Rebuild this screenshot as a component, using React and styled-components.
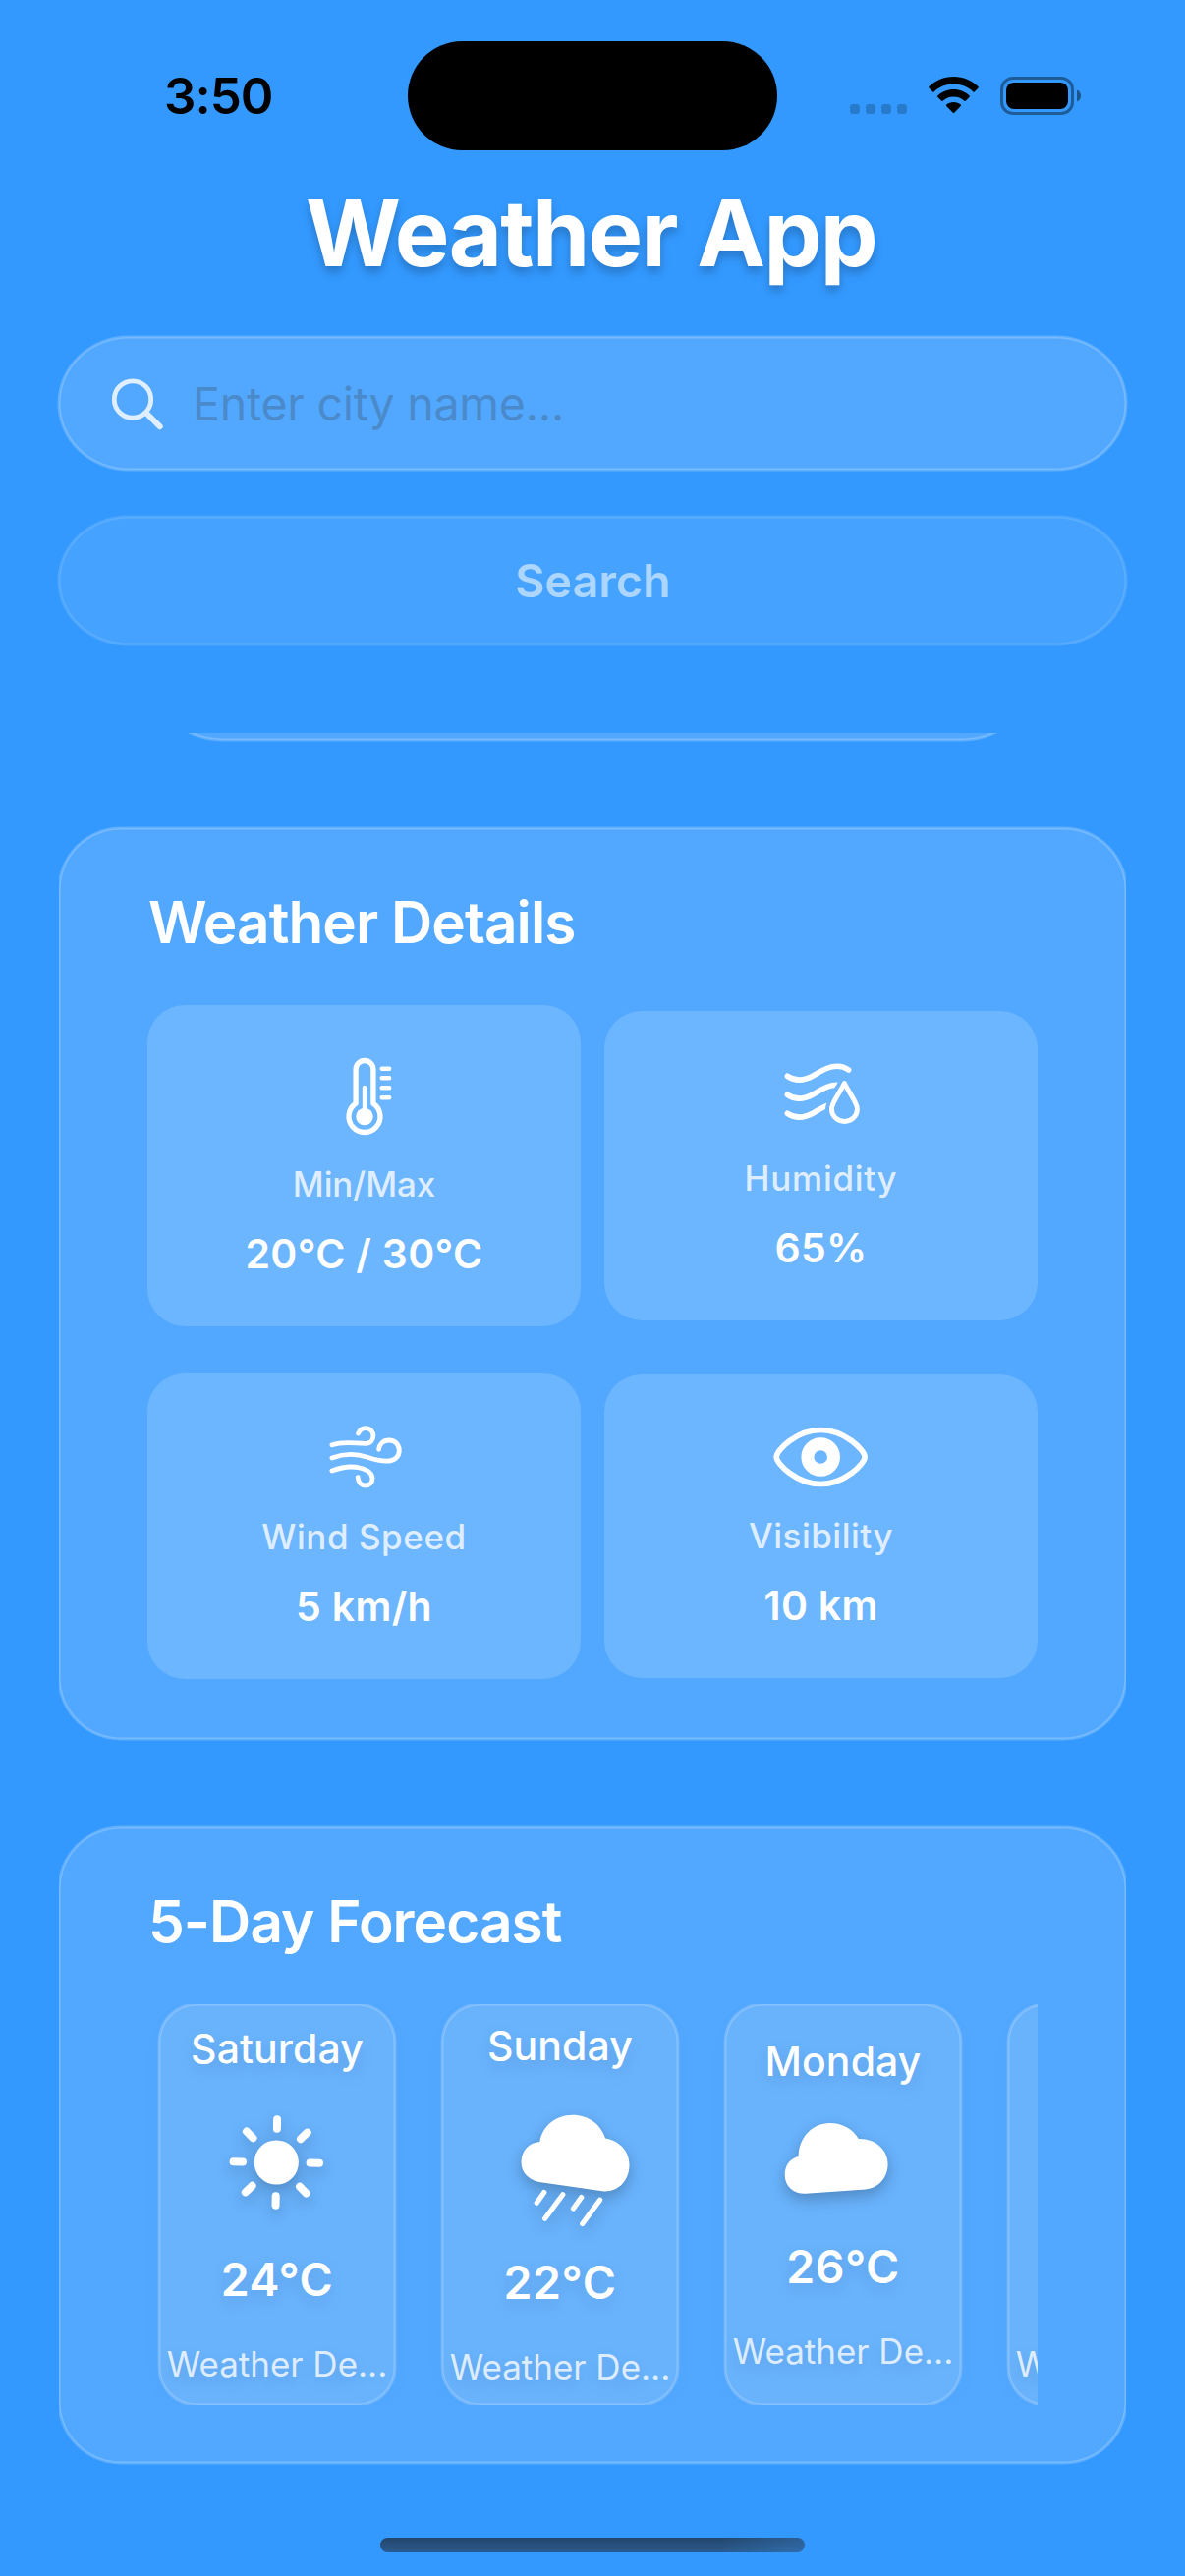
import React from "react";
import styled, { createGlobalStyle } from "styled-components";

const GlobalStyle = createGlobalStyle`
  * { box-sizing: border-box; }
  body {
    margin: 0;
    background: #3399ff;
    font-family: Inter, "Liberation Sans", sans-serif;
    color: #fff;
  }
`;

const Screen = styled.main`
  position: relative;
  display: flex;
  flex-direction: column;
  width: 1206px;
  height: 2622px;
  overflow: hidden;
  background: #3399ff;
`;

/* Status bar */

const StatusBar = styled.header`
  display: grid;
  grid-template-columns: 415px 376px 415px;
  align-items: center;
  height: 193px;
  flex: none;
`;

const Clock = styled.time`
  padding: 3px 0 0 167px;
  font-size: 51px;
  font-weight: 600;
  line-height: 62px;
  letter-spacing: -1px;
  color: #000;
`;

const Island = styled.div`
  height: 111px;
  margin-top: 1px;
  border-radius: 56px;
  background: #000;
`;

const StatusIcons = styled.div`
  display: flex;
  align-items: center;
  gap: 22px;
  padding: 1px 0 0 74px;
`;

const SignalDots = styled.div`
  display: flex;
  gap: 6px;
  margin-top: 27px;
`;

const SignalDot = styled.i`
  width: 10px;
  height: 10px;
  border-radius: 3px;
  background: rgba(0, 0, 0, 0.2);
`;

/* Header and search */

const Title = styled.h1`
  margin: -12px 0 50px;
  flex: none;
  font-size: 93.5px;
  font-weight: 700;
  line-height: 112px;
  letter-spacing: -1.7px;
  text-indent: -3px;
  text-align: center;
  text-shadow: 0 6px 10px rgba(0, 0, 0, 0.22);
`;

const SearchArea = styled.section`
  display: flex;
  flex-direction: column;
  gap: 48px;
  padding: 0 60px;
  flex: none;
`;

const glass = (stroke) => `
  box-shadow: 0 0 0 1.5px rgba(255, 255, 255, ${stroke}),
    inset 0 0 0 1.5px rgba(255, 255, 255, ${stroke});
`;

const SearchField = styled.label`
  display: flex;
  align-items: center;
  height: 135px;
  padding: 0 50px;
  gap: 26px;
  border-radius: 71px / 67.5px;
  background: rgba(255, 255, 255, 0.152);
  ${glass(0.22)}
`;

const CityInput = styled.input`
  flex: 1;
  min-width: 0;
  padding: 0;
  border: 0;
  outline: 0;
  background: none;
  font: 400 46.5px/60px Inter, "Liberation Sans", sans-serif;
  letter-spacing: -0.25px;
  color: #fff;
  &::placeholder { color: #4b8aca; opacity: 1; }
`;

const SearchButton = styled.button`
  height: 130px;
  border: 0;
  border-radius: 71px / 65px;
  background: rgba(255, 255, 255, 0.152);
  ${glass(0.22)}
  opacity: 0.6;
  font: 600 46.5px/60px Inter, "Liberation Sans", sans-serif;
  letter-spacing: 0.1px;
  text-indent: 1px;
  color: #fff;
`;

/* Scrolling content */

const ScrollArea = styled.section`
  display: flex;
  flex-direction: column;
  gap: 90px;
  margin: 90px 60px 0;
  flex: 1;
  overflow: hidden;
`;

const CurrentWeatherEdge = styled.div`
  height: 160px;
  margin: -153px 90px 0;
  flex: none;
  border-radius: 76px;
  background: rgba(255, 255, 255, 0.152);
  ${glass(0.22)}
`;

const Card = styled.section`
  flex: none;
  height: ${(p) => p.$height}px;
  padding: 60px 90px;
  border-radius: 63px;
  background: rgba(255, 255, 255, 0.152);
  ${glass(0.22)}
`;

const CardTitle = styled.h2`
  margin: 0 0 48px;
  padding-left: 1px;
  font-size: 58.5px;
  font-weight: 600;
  line-height: 72px;
  letter-spacing: -0.95px;
`;

const DetailGrid = styled.div`
  display: grid;
  grid-template-columns: 1fr 1fr;
  align-items: center;
  gap: 48px 24px;
`;

const DetailTile = styled.article`
  display: flex;
  flex-direction: column;
  align-items: center;
  padding: 45px 0 44px;
  border-radius: 38px;
  background: rgba(255, 255, 255, 0.152);
`;

const DetailIcon = styled.div`
  display: flex;
  height: ${(p) => p.$height}px;
`;

const DetailLabel = styled.span`
  margin: 18px 0 19px;
  font-size: 35px;
  font-weight: 450;
  line-height: 46px;
  letter-spacing: ${(p) => p.$tracking}px;
  color: rgba(255, 255, 255, 0.8);
`;

const DetailValue = styled.span`
  font-size: 41px;
  font-weight: 600;
  line-height: 59px;
  letter-spacing: 0.3px;
`;

const ForecastRow = styled.div`
  display: flex;
  gap: 48px;
  height: 408px;
  padding-left: 12px;
  overflow: hidden;
`;

const ForecastCard = styled.article`
  display: flex;
  flex-direction: column;
  align-items: center;
  justify-content: center;
  gap: 36px;
  width: 240px;
  height: 408px;
  flex: none;
  border-radius: 38px;
  background: rgba(244, 244, 244, 0.15);
  box-shadow: 0 0 0 1.5px rgba(255, 255, 255, 0.2),
    inset 0 0 0 1.5px rgba(255, 255, 255, 0.2),
    0 6px 30px rgba(0, 0, 0, 0.02);
  white-space: nowrap;
  text-shadow: 0 6px 18px rgba(0, 0, 0, 0.12);
`;

const Day = styled.span`
  font-size: 41px;
  font-weight: 500;
  line-height: 50px;
  letter-spacing: 0.1px;
`;

const ForecastIcon = styled.div`
  display: flex;
  height: ${(p) => p.$height}px;
  filter: drop-shadow(0 6px 8px rgba(0, 0, 0, 0.24));
`;

const Temperature = styled.span`
  font-size: 46.5px;
  font-weight: 600;
  line-height: 57px;
  letter-spacing: 0.5px;
`;

const Description = styled.span`
  font-size: 35px;
  line-height: 43px;
  color: rgba(255, 255, 255, 0.8);
`;

const HomeIndicator = styled.div`
  position: absolute;
  left: 387px;
  bottom: 24px;
  width: 432px;
  height: 15px;
  border-radius: 8px;
  background: linear-gradient(90deg, transparent 80%, rgba(60, 140, 220, 0.35)),
    linear-gradient(180deg, #24466b, #295b92);
`;

const Icon = styled.svg`
  display: block;
  flex: none;
  overflow: visible;
  fill: none;
  stroke: #fff;
  stroke-linecap: round;
  stroke-linejoin: round;
`;

const SolidIcon = styled(Icon)`
  fill: #000;
  stroke: none;
`;

const WifiIcon = () => (
  <SolidIcon width="51" height="38" viewBox="0 0 51 38">
    <path d="M25.5 0C35.3 0 44.3 3.9 50.6 10.2C51 10.6 51 11.1 50.6 11.5L46.7 15.4C46.3 15.8 45.8 15.8 45.4 15.4C40.2 10.4 33.2 7.5 25.5 7.5S10.8 10.4 5.6 15.4C5.2 15.8 4.7 15.8 4.3 15.4L.4 11.5C0 11.1 0 10.6 .4 10.2C6.7 3.9 15.7 0 25.5 0Z" />
    <path d="M25.5 13C31.8 13 37.5 15.5 41.7 19.4C42.1 19.8 42.1 20.3 41.7 20.7L37.7 24.7C37.3 25.1 36.9 25.1 36.5 24.7C33.6 22 29.7 20.5 25.5 20.5S17.4 22 14.5 24.7C14.1 25.1 13.7 25.1 13.3 24.7L9.3 20.7C8.9 20.3 8.9 19.8 9.3 19.4C13.5 15.5 19.2 13 25.5 13Z" />
    <path d="M25.5 26C28.3 26 30.9 27 32.8 28.6C33.2 29 33.2 29.5 32.8 29.9L26.2 36.7C25.8 37.1 25.2 37.1 24.8 36.7L18.2 29.9C17.8 29.5 17.8 29 18.2 28.6C20.1 27 22.7 26 25.5 26Z" />
  </SolidIcon>
);

const BatteryIcon = () => (
  <Icon width="83" height="39" viewBox="0 0 83 39">
    <rect x="1.5" y="1.5" width="72" height="36" rx="11.5" stroke="#000" strokeOpacity="0.4" strokeWidth="3" />
    <rect x="6" y="6" width="63" height="27" rx="8" fill="#000" stroke="none" />
    <path d="M78 13.5V25.5C80.5 24.5 82 22.2 82 19.5S80.5 14.5 78 13.5Z" fill="#000" fillOpacity="0.45" stroke="none" />
  </Icon>
);

const SearchIcon = () => (
  <Icon width="60" height="60" viewBox="0 0 60 60" opacity="0.82">
    <circle cx="25" cy="25.5" r="18.7" strokeWidth="4.8" />
    <path d="M39.5 40L52.7 53.2" strokeWidth="6" />
  </Icon>
);

const ThermometerIcon = () => (
  <Icon width="60" height="96" viewBox="0 0 60 96" strokeWidth="5.3">
    <path d="M21.1 20.4a8.9 8.9 0 0 1 17.8 0V55.2A16 16 0 1 1 21.1 55.2Z" />
    <path d="M30 39V68" strokeWidth="4.4" />
    <circle cx="30" cy="68.5" r="8.7" fill="#fff" stroke="none" />
    <path d="M47.7 19.7h7.5M47.7 29.3h7.5M47.7 39.3h7.5M47.7 49.3h7.5" strokeWidth="4.4" />
  </Icon>
);

const DROP = "M63.4 28.6C59.5 37.5 50.4 47.5 50.4 55a13 12.5 0 0 0 26 0C76.4 47.5 67.3 37.5 63.4 28.6Z";

const HumidityIcon = () => (
  <Icon width="80" height="84" viewBox="0 0 80 84" strokeWidth="5.6">
    <mask id="around-drop" maskUnits="userSpaceOnUse" x="-5" y="-5" width="90" height="94">
      <rect x="-5" y="-5" width="90" height="94" fill="#fff" stroke="none" />
      <path d={DROP} fill="#000" stroke="#000" strokeWidth="13" />
    </mask>
    <path d="M5.4 21.3C12.5 26 22 26.3 31.5 21C40 16.2 46.5 11.3 56.2 11.3C60.5 11.3 64.3 12.6 67.6 15" />
    <g mask="url(#around-drop)">
      <path d="M5.4 40.3C12.5 45 22 45.3 31.5 40C40 35.2 46.5 30.3 56.2 30.3" />
      <path d="M5.4 59.3C12.5 64 22 64.3 31.5 59C40 54.2 46.5 49.3 56.2 49.3" />
    </g>
    <path d={DROP} strokeWidth="4.9" />
  </Icon>
);

const WindIcon = () => (
  <Icon width="80" height="80" viewBox="0 0 80 80" strokeWidth="4.8">
    <path d="M6.9 27.7C19 23.5 30 26.3 41.3 26.3C45.8 26.3 48.9 22.8 48.9 18.5C48.9 14 45.5 10.6 41.3 10.6C37.5 10.6 34.8 12.8 33.6 16" />
    <path d="M6.9 41C19 36.5 31 36.3 43 40.3C50 42.7 56 44.2 62.4 44.2C70 44.2 75.3 40 75.3 33.5C75.3 27.5 71 23 65 23C59 23 55.2 27 54.6 32.3" />
    <path d="M6.9 54C19 49.5 28 49.2 35 51C43 53 48 56.5 48 62C48 66 44.8 69 40.8 69C36.5 69 33.4 65.5 33.2 60.7" />
  </Icon>
);

const EyeIcon = () => (
  <Icon width="100" height="78" viewBox="0 0 100 78" strokeWidth="5.7">
    <path d="M49.2 11.5C73.5 11.5 94.1 32 94.1 39C94.1 46 73.5 66.5 49.2 66.5C24.9 66.5 4.2 46 4.2 39C4.2 32 24.9 11.5 49.2 11.5Z" />
    <circle cx="49.2" cy="39" r="13.3" strokeWidth="13" />
  </Icon>
);

const RAY_ANGLES = [1, 46, 91, 136, 181, 226, 271, 316];

const SunIcon = () => (
  <Icon width="110" height="109.5" viewBox="0 0 110 109.5" strokeWidth="8">
    <circle cx="54.3" cy="55" r="22.6" fill="#fff" stroke="none" />
    {RAY_ANGLES.map((a) => (
      <path key={a} d="M54.3 20.7V11.3" transform={`rotate(${a} 54.3 55)`} />
    ))}
  </Icon>
);

const RainIcon = () => (
  <Icon width="120" height="115.5" viewBox="0 0 120 115.5" strokeWidth="5.2">
    <path
      d="M42 78.6C29 77 20.5 69 20.5 58C20.5 46.5 28 38 39.4 37.1C42 20.5 56 9.7 73 9.7C88.5 9.7 101.5 19 106.1 33.4C120.5 36 130.5 46 130.5 60.5C130.5 77.5 118 89 103 87.3Z"
      fill="#fff"
      stroke="none"
    />
    <path d="M43.8 88.6L36.2 99.2M62.8 90.8L44.6 115.2M81.7 93.6L73.5 105M100.6 96.2L82.7 120.5" />
  </Icon>
);

const CloudIcon = () => (
  <Icon width="120" height="84" viewBox="0 0 120 84">
    <path
      d="M22 73.8C9.5 74.3 .7 66.5 .7 54.5C.7 45 6 38 14.6 36C14.8 16.5 29 2 46.5 2C59 2 70 8 75.8 18C92.5 17.5 105.6 29 105.6 43.5C105.6 57 96.5 68 83 69.5Z"
      fill="#fff"
      stroke="none"
    />
  </Icon>
);

const details = [
  { label: "Min/Max", value: "20°C / 30°C", height: 96, tracking: -0.1, Glyph: ThermometerIcon },
  { label: "Humidity", value: "65%", height: 84, tracking: 0.7, Glyph: HumidityIcon },
  { label: "Wind Speed", value: "5 km/h", height: 80, tracking: 0.55, Glyph: WindIcon },
  { label: "Visibility", value: "10 km", height: 78, tracking: 0.5, Glyph: EyeIcon },
];

const forecast = [
  { day: "Saturday", temp: "24°C", height: 109.5, Glyph: SunIcon },
  { day: "Sunday", temp: "22°C", height: 115.5, Glyph: RainIcon },
  { day: "Monday", temp: "26°C", height: 84, Glyph: CloudIcon },
  { day: "Tuesday", temp: "25°C", height: 109.5, Glyph: SunIcon },
];

export default function App() {
  return (
    <>
      <GlobalStyle />
      <Screen>
        <StatusBar>
          <Clock>3:50</Clock>
          <Island />
          <StatusIcons>
            <SignalDots>
              <SignalDot />
              <SignalDot />
              <SignalDot />
              <SignalDot />
            </SignalDots>
            <WifiIcon />
            <BatteryIcon />
          </StatusIcons>
        </StatusBar>

        <Title>Weather App</Title>

        <SearchArea>
          <SearchField>
            <SearchIcon />
            <CityInput placeholder="Enter city name..." />
          </SearchField>
          <SearchButton type="button">Search</SearchButton>
        </SearchArea>

        <ScrollArea>
          <CurrentWeatherEdge />

          <Card $height={927}>
            <CardTitle>Weather Details</CardTitle>
            <DetailGrid>
              {details.map(({ label, value, height, tracking, Glyph }) => (
                <DetailTile key={label}>
                  <DetailIcon $height={height}>
                    <Glyph />
                  </DetailIcon>
                  <DetailLabel $tracking={tracking}>{label}</DetailLabel>
                  <DetailValue>{value}</DetailValue>
                </DetailTile>
              ))}
            </DetailGrid>
          </Card>

          <Card $height={647}>
            <CardTitle>5-Day Forecast</CardTitle>
            <ForecastRow>
              {forecast.map(({ day, temp, height, Glyph }) => (
                <ForecastCard key={day}>
                  <Day>{day}</Day>
                  <ForecastIcon $height={height}>
                    <Glyph />
                  </ForecastIcon>
                  <Temperature>{temp}</Temperature>
                  <Description>Weather De...</Description>
                </ForecastCard>
              ))}
            </ForecastRow>
          </Card>
        </ScrollArea>

        <HomeIndicator />
      </Screen>
    </>
  );
}
